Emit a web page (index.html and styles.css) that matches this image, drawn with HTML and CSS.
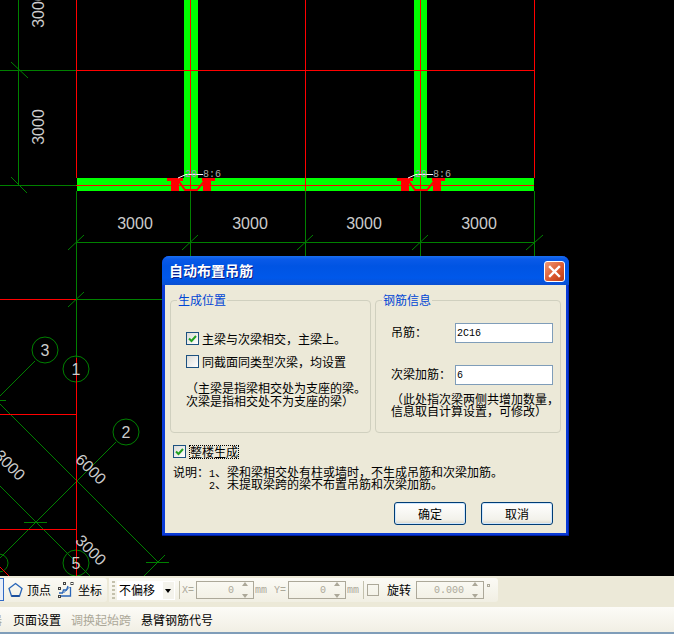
FILE: index.html
```html
<!DOCTYPE html>
<html lang="zh">
<head>
<meta charset="utf-8">
<title>自动布置吊筋</title>
<link rel="stylesheet" href="styles.css">
</head>
<body>
<main class="canvas">
  <svg class="cad" width="674" height="576" viewBox="0 0 674 576" xmlns="http://www.w3.org/2000/svg" xmlns:xlink="http://www.w3.org/1999/xlink">
    <defs>
      <g id="joint">
        <path class="red-fill" d="M167 178h16v3h-4v10h-8v-10h-4zM202 178h13v3h-4v10h-8v-10h-1z"/>
        <path class="red-thick" d="M178 180L185 190H197L205 180"/>
        <path class="white-line" d="M178 178L186 174.500H203"/>
        <text class="rebar-a" x="185" y="177">20</text>
        <text class="rebar-b" x="203" y="177">8:6</text>
      </g>
    </defs>
    <!-- beams -->
    <rect class="beam" x="184" y="0" width="14" height="178"/>
    <rect class="beam" x="414" y="0" width="13" height="178"/>
    <rect class="beam" x="77" y="178" width="457" height="13"/>
    <!-- dim green lines -->
    <g class="dim crisp">
      <path d="M18.500 0V186M0 70.500H76M0 185.500H76"/>
      <path d="M76.500 191V358M190.500 191V256M305.500 191V256M420.500 191V256M534.500 191V256"/>
      <path d="M76 242.500H534"/>
      <path d="M76 299.500H162"/>
      <path d="M0 400.500H6M24 522.500H47M146 562.500H169"/>
    </g>
    <g class="dim">
      <path d="M11 62L28 78M11 177L27 193"/>
      <path d="M68 250L84 235M182 250L198 235M297 250L313 235M412 250L428 235M526 250L543 235"/>
      <path d="M68 307L84 292"/>
      <path d="M35 361L0 396"/>
      <path d="M116 442L0 558"/>
      <path d="M0 404L158 562"/>
      <path d="M0 486L90 576"/>
      <path d="M165 555L144 576"/>
      <circle class="ring" cx="45" cy="350" r="13"/>
      <circle class="ring" cx="76" cy="369" r="13"/>
      <circle class="ring" cx="126" cy="432" r="13"/>
      <circle class="ring" cx="76" cy="563" r="13"/>
      <circle class="ring" cx="-1" cy="563" r="9"/>
    </g>
    <!-- red axes -->
    <g class="red crisp">
      <path d="M76.500 0V178M190.500 0V191M305.500 0V191M420.500 0V191M534.500 0V178"/>
      <path d="M76 70.500H534M76 185.500H534"/>
      <path d="M76.500 358V576M0 299.500H76M0 414.500H76M0 529.500H76"/>
    </g>
    <path class="red" d="M0 567L9 576"/>
    <use xlink:href="#joint" href="#joint"/>
    <use xlink:href="#joint" href="#joint" transform="translate(230 0)"/>
    <!-- dimensions -->
    <g class="dimtext">
      <text x="135" y="229">3000</text>
      <text x="250" y="229">3000</text>
      <text x="364" y="229">3000</text>
      <text x="479" y="229">3000</text>
      <text transform="translate(44 127) rotate(-90)">3000</text>
      <text transform="translate(44 10) rotate(-90)">3000</text>
      <text transform="translate(6 469) rotate(45)">3000</text>
      <text transform="translate(87 473) rotate(45)">6000</text>
      <text transform="translate(87 554) rotate(45)">3000</text>
      <text x="45" y="356">3</text>
      <text x="76" y="375">1</text>
      <text x="126" y="438">2</text>
      <text x="76" y="569">5</text>
    </g>
  </svg>

  <section class="dialog">
    <header class="titlebar">
      <h1 class="title">自动布置吊筋</h1>
      <button class="close" type="button" aria-label="关闭">
        <svg width="13" height="13" viewBox="0 0 13 13"><path d="M2 2L11 11M11 2L2 11" stroke="#fff" stroke-width="2.400" stroke-linecap="square" fill="none"/></svg>
      </button>
    </header>
    <div class="dialog-body">
      <div class="groups">
        <div class="group group-pos">
          <div class="legend">生成位置</div>
          <label class="check-row">
            <span class="check"><svg width="11" height="11" viewBox="0 0 11 11"><path d="M2 5.500L4.500 8L9 3" stroke="#21a121" stroke-width="2" fill="none"/></svg></span>
            <span>主梁与次梁相交，主梁上。</span>
          </label>
          <label class="check-row check-row-second">
            <span class="check"></span>
            <span>同截面同类型次梁，均设置</span>
          </label>
          <p class="note note-left">（主梁是指梁相交处为支座的梁。<br>次梁是指相交处不为支座的梁）</p>
        </div>
        <div class="group group-rebar">
          <div class="legend">钢筋信息</div>
          <div class="field">
            <span class="field-label">吊筋：</span>
            <input class="field-input" type="text" value="2C16">
          </div>
          <div class="field field-second">
            <span class="field-label">次梁加筋：</span>
            <input class="field-input" type="text" value="6">
          </div>
          <p class="note note-right">（此处指次梁两侧共增加数量，<br>信息取自计算设置，可修改）</p>
        </div>
      </div>
      <label class="whole">
        <span class="check"><svg width="11" height="11" viewBox="0 0 11 11"><path d="M2 5.500L4.500 8L9 3" stroke="#21a121" stroke-width="2" fill="none"/></svg></span>
        <span class="focus">整楼生成</span>
      </label>
      <div class="explain">
        <span>说明：</span>
        <span><span class="ascii">1</span>、梁和梁相交处有柱或墙时，不生成吊筋和次梁加筋。</span>
        <span></span>
        <span><span class="ascii">2</span>、未提取梁跨的梁不布置吊筋和次梁加筋。</span>
      </div>
      <div class="actions">
        <button class="btn" type="button">确定</button>
        <button class="btn" type="button">取消</button>
      </div>
    </div>
  </section>
</main>

<div class="statusbar">
  <div class="tools tools-snap">
    <span class="selected-edge"></span>
    <span class="tool tool-vertex">
      <svg width="15" height="16" viewBox="0 0 15 16"><path d="M7.500 1.500L14 6.500L11.500 14H3.500L1 6.500Z" fill="none" stroke="#2a66b8" stroke-width="1.300"/><path d="M3.500 14H11.500" stroke="#1c4f9c" stroke-width="2"/></svg>
      <span>顶点</span>
    </span>
    <span class="tool">
      <svg width="16" height="17" viewBox="0 0 16 17"><path d="M10 4L8.500 8H5.500L4.500 11H1M12.500 5V14H3" fill="none" stroke="#2a66b8" stroke-width="1.300"/><path d="M5.500 11L11.500 5" stroke="#2a66b8"/><rect x="0.500" y="5.500" width="2" height="2" fill="none" stroke="#444"/><rect x="0.500" y="13.500" width="2" height="2" fill="none" stroke="#444"/><rect x="13" y="0.500" width="2" height="2" fill="none" stroke="#444"/><rect x="5.500" y="0.500" width="2" height="2" fill="none" stroke="#444"/></svg>
      <span>坐标</span>
    </span>
  </div>
  <div class="tools tools-offset">
    <span class="grip"></span>
    <div class="select"><span>不偏移</span><span class="caret"></span></div>
    <span class="sep"></span>
    <span class="muted axis">X=</span>
    <div class="num num-short"><span>0</span><span class="spin"></span></div>
    <span class="muted unit">mm</span>
    <span class="muted axis axis-y">Y=</span>
    <div class="num num-short"><span>0</span><span class="spin"></span></div>
    <span class="muted unit">mm</span>
    <span class="sep sep-second"></span>
    <span class="box"></span>
    <span class="rotate">旋转</span>
    <div class="num num-long"><span>0.000</span><span class="spin"></span></div>
    <span class="degree"></span>
  </div>
</div>
<nav class="menubar">
  <span class="cut">器</span>
  <span class="menu-item">页面设置</span>
  <span class="menu-item is-disabled">调换起始跨</span>
  <span class="menu-item">悬臂钢筋代号</span>
</nav>
</body>
</html>
```

FILE: styles.css
```css
* { box-sizing: border-box; }

html, body {
  margin: 0;
  height: 634px;
  overflow: hidden;
}

body {
  width: 674px;
  background: #7f9db9;
  font: 12px/12px "Noto Sans CJK SC", "Liberation Sans", sans-serif;
  color: #000;
}

/* ---------- CAD drawing ---------- */
.canvas {
  position: relative;
  height: 576px;
  background: #000;
  overflow: hidden;
}

.cad { display: block; }
.crisp { shape-rendering: crispEdges; }
.beam { fill: #00ff00; }
.dim { fill: none; stroke: #008000; stroke-width: 1; }
.red { fill: none; stroke: #ff0000; stroke-width: 1; }
.red-fill { fill: #ff0000; }
.red-thick { fill: none; stroke: #ff0000; stroke-width: 2; }
.white-line { fill: none; stroke: #ffffff; stroke-width: 1; }
.rebar-a, .rebar-b { font: 10px "Liberation Mono", monospace; }
.rebar-a { fill: #b090c0; }
.rebar-b { fill: #aaaaaa; }
.dimtext text {
  font: 16px "Liberation Sans", sans-serif;
  fill: #cccccc;
  text-anchor: middle;
}

/* ---------- Dialog window ---------- */
.dialog {
  position: absolute;
  left: 162px;
  top: 256px;
  width: 407px;
  height: 280px;
  display: flex;
  flex-direction: column;
  padding: 0 3px 3px;
  border-radius: 7px 7px 0 0;
  background: #0a3bd6;
  box-shadow: inset 0 -1px 0 #001ea0, inset -1px 0 0 #0026b8;
}

.titlebar {
  flex: none;
  height: 29px;
  margin: 0 -3px;
  padding: 5px 4px 3px 8px;
  display: flex;
  align-items: center;
  justify-content: space-between;
  border-radius: 7px 7px 0 0;
  background: linear-gradient(#1a6ff0 0, #0a5ae8 3px, #0054e3 10px, #0058ea 22px, #0a4fd2 29px);
}

.title {
  margin: -3px 0 0 -1px;
  font-size: 14px;
  line-height: 16px;
  font-weight: 700;
  color: #fff;
  text-shadow: 1px 1px 0 #0a1f8a;
}

.close {
  width: 21px;
  height: 21px;
  padding: 0;
  display: flex;
  align-items: center;
  justify-content: center;
  border: 1px solid #fff;
  border-radius: 3px;
  background: linear-gradient(135deg, #ee9a78, #dd5a30 55%, #b83a14);
}

.dialog-body {
  flex: 1;
  min-height: 0;
  padding: 15px 13px 8px 5px;
  background: #ece9d8;
}

.groups {
  display: flex;
  gap: 4px;
  margin-right: -8px;
}

.group {
  position: relative;
  flex: none;
  height: 133px;
  padding-left: 15px;
  border: 1px solid #d0d0bf;
  border-radius: 4px;
}

.group-pos { width: 201px; padding-top: 31px; }
.group-rebar { width: 186px; padding-top: 22px; }

.legend {
  position: absolute;
  left: 6px;
  top: -7px;
  padding: 0 1px;
  background: #ece9d8;
  color: #0046d5;
}

.check-row {
  display: flex;
  align-items: center;
  gap: 3px;
  height: 13px;
}

.check-row-second { margin-top: 10px; }

.check {
  flex: none;
  width: 13px;
  height: 13px;
  display: flex;
  align-items: center;
  justify-content: center;
  border: 1px solid #1c5180;
  background: linear-gradient(135deg, #dcdcd7, #ffffff);
}

.note { margin: 0; }
.note-left { margin-top: 13px; line-height: 13px; }
.note-right { margin-top: 8px; line-height: 12px; }

.field {
  display: flex;
  align-items: center;
  height: 20px;
}

.field-second { margin-top: 22px; }
.field-label { flex: none; width: 64px; margin-top: -3px; }

.field-input {
  width: 98px;
  height: 20px;
  padding: 1px;
  border: 1px solid #7f9db9;
  border-radius: 0;
  background: #fff;
  font: 10px "Liberation Mono", monospace;
  color: #000;
}

.whole {
  display: flex;
  align-items: center;
  gap: 3px;
  height: 13px;
  margin: 12px 0 0 3px;
}

.focus {
  height: 14px;
  line-height: 12px;
  border: 1px dotted #000;
}

.explain {
  display: grid;
  grid-template-columns: 36px 1fr;
  grid-auto-rows: 12px;
  margin: 8px 0 0 3px;
  line-height: 12px;
}

.ascii { font: 10px/10px "Liberation Mono", monospace; }

.actions {
  display: flex;
  justify-content: flex-end;
  gap: 15px;
  margin-top: 12px;
}

.btn {
  width: 72px;
  height: 23px;
  padding: 0;
  border: 1px solid #003c74;
  border-radius: 3px;
  background: linear-gradient(#ffffff, #f2f1ea 80%, #d9d6c8);
  box-shadow: inset 0 0 0 1px #cee7ff;
  font: 12px "Noto Sans CJK SC", sans-serif;
  color: #000;
}

/* ---------- Bottom bars ---------- */
.statusbar {
  height: 31px;
  padding-top: 2px;
  display: flex;
  gap: 2px;
  background: #ece9d8;
}

.tools {
  height: 24px;
  display: flex;
  align-items: center;
  border-radius: 0 3px 3px 0;
  background: linear-gradient(#fbfaf5, #f1efe3);
}

.tools-snap { flex: none; width: 107px; position: relative; padding-left: 8px; gap: 7px; }
.tools-offset { flex: none; width: 389px; padding-left: 3px; }

.selected-edge {
  position: absolute;
  left: 0;
  top: 0;
  width: 4px;
  height: 23px;
  border: 1px solid #316ac5;
  border-left: 0;
  background: #e8eef8;
}

.tool { display: flex; align-items: center; gap: 4px; }

.grip {
  flex: none;
  width: 3px;
  height: 18px;
  margin-right: 2px;
  background: repeating-linear-gradient(#c4c1ad 0 2px, transparent 2px 4px);
}

.select {
  flex: none;
  width: 58px;
  height: 19px;
  padding: 0 2px;
  display: flex;
  align-items: center;
  justify-content: space-between;
  background: #fff;
}

.caret {
  position: relative;
  width: 11px;
  height: 17px;
  margin-right: -1px;
  background: #f4f3ec;
}

.caret::after {
  content: "";
  position: absolute;
  left: 2px;
  top: 7px;
  border: 3.500px solid transparent;
  border-top: 4px solid #000;
  border-bottom: 0;
}

.sep {
  flex: none;
  width: 1px;
  height: 18px;
  margin: 0 2px 0 4px;
  background: #c4c1ad;
}

.sep-second { margin: 0 3px 0 4px; }

.muted,
.num {
  font: 10px "Liberation Mono", monospace;
  color: #aca899;
}

.axis { flex: none; width: 14px; }
.axis-y { margin-left: 7px; }
.unit { flex: none; width: 12px; margin-left: 1px; }

.num {
  flex: none;
  height: 18px;
  display: flex;
  align-items: center;
  justify-content: flex-end;
  gap: 6px;
  padding-right: 2px;
  border: 1px solid #aca899;
}

.num-short { width: 58px; }
.num-long { width: 68px; margin-left: 5px; }

.spin {
  position: relative;
  width: 11px;
  height: 16px;
}

.spin::before,
.spin::after {
  content: "";
  position: absolute;
  left: 2px;
  border: 3.500px solid transparent;
}

.spin::before { top: 0; border-bottom: 4px solid #aca899; border-top: 0; }
.spin::after { bottom: 0; border-top: 4px solid #aca899; border-bottom: 0; }

.box {
  flex: none;
  width: 12px;
  height: 12px;
  border: 1px solid #aca899;
}

.rotate { flex: none; margin-left: 8px; width: 24px; white-space: nowrap; }

.degree {
  flex: none;
  width: 3px;
  height: 3px;
  margin: -10px 0 0 3px;
  border: 1px solid #aca899;
}

.menubar {
  height: 25px;
  display: flex;
  align-items: center;
  background: linear-gradient(#fcfbf7, #f1efe4);
}

.cut {
  width: 2px;
  margin-right: 11px;
  overflow: hidden;
  direction: rtl;
  color: #aca899;
}

.menu-item { margin-right: 10px; white-space: nowrap; }
.is-disabled { color: #aca899; }
```
